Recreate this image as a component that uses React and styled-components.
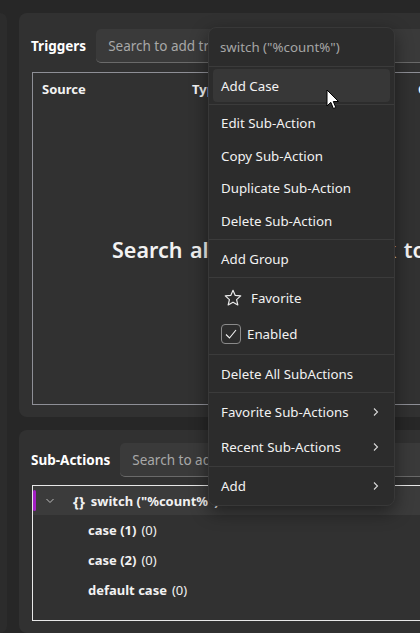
import React from "react";
import styled, { createGlobalStyle } from "styled-components";

const Global = createGlobalStyle`
  html, body {
    margin: 0;
    padding: 0;
    background: #272727;
    overflow: hidden;
  }
  body {
    font-family: "Noto Sans", "Open Sans", sans-serif;
    color: #f2f2f2;
  }
`;

const Page = styled.div`
  position: relative;
  display: flex;
  gap: 12px;
  padding-top: 13px;
  height: 620px;
  width: 420px;
  overflow: hidden;
`;

const Sliver = styled.div`
  width: 7px;
  flex-shrink: 0;
  background: #2c2c2c;
  border-radius: 0 8px 8px 0;
`;

const Column = styled.div`
  display: flex;
  flex-direction: column;
  gap: 13px;
  width: 640px;
  flex-shrink: 0;
`;

const Panel = styled.section`
  display: flex;
  flex-direction: column;
  background: #313131;
  border-radius: 8px;
  height: ${(p) => (p.$h ? `${p.$h}px` : "auto")};
  flex: ${(p) => (p.$h ? "none" : "1")};
`;

const PanelHeader = styled.div`
  display: flex;
  align-items: center;
  gap: 10px;
  padding: ${(p) => p.$top || 16}px 0 0 12px;
`;

const Label = styled.span`
  font-size: 13.5px;
  font-weight: 700;
  color: #ffffff;
`;

const SearchBox = styled.div`
  flex: 1;
  height: 34px;
  box-sizing: border-box;
  display: flex;
  align-items: center;
  padding-left: 12px;
  background: #3a3a3a;
  border-radius: 5px;
  border-bottom: 1px solid #6a6a6a;
  font-size: 13.5px;
  color: #a8a8a8;
`;

const TableBox = styled.div`
  margin: ${(p) => (p.$focus ? 8 : 9)}px 0 12px 13px;
  flex: 1;
  border: 1px solid ${(p) => (p.$focus ? "#e8e8e8" : "#8e8f96")};
  border-right: none;
  display: flex;
  flex-direction: column;
`;

const TableHead = styled.div`
  display: grid;
  grid-template-columns: 150px 226px 1fr;
  padding: 7px 0 0 9px;
  font-size: 13px;
  font-weight: 700;
  line-height: 18px;
`;

const EmptyText = styled.div`
  flex: 1;
  display: flex;
  align-items: center;
  padding: 0 0 4px 79px;
  font-size: 21.5px;
  font-weight: 600;
  word-spacing: 2px;
  white-space: nowrap;
`;

const TreeRow = styled.div`
  position: relative;
  display: flex;
  align-items: center;
  height: ${(p) => (p.$top ? 29 : 30)}px;
  padding-left: ${(p) => (p.$top ? 12 : 55)}px;
  background: ${(p) => (p.$selected ? "#3b3b3b" : "transparent")};
  font-size: 13px;
  gap: 5px;
  white-space: nowrap;

  &::before {
    content: "";
    display: ${(p) => (p.$selected ? "block" : "none")};
    position: absolute;
    left: 0;
    top: 4px;
    width: 3px;
    height: 21px;
    background: #a31fc4;
    border-radius: 2px;
  }
`;

const Bold = styled.span`
  font-weight: 700;
`;

const Braces = styled.span`
  font-size: 15px;
  font-weight: 700;
  margin: 0 1px 0 13px;
`;

const Menu = styled.div`
  position: absolute;
  left: 208px;
  top: 27px;
  width: 187px;
  box-sizing: border-box;
  background: #2c2c2c;
  border: 1px solid #383838;
  border-radius: 8px;
  box-shadow: 0 6px 18px rgba(0, 0, 0, 0.45);
  font-size: 13.3px;
  color: #f2f2f2;
`;

const MenuHeader = styled.div`
  height: 38px;
  display: flex;
  align-items: center;
  padding-left: 11px;
  color: #a6a6a6;
`;

const Section = styled.div`
  border-top: 1px solid #3b3b3b;
  padding: 2px 0;
`;

const Item = styled.div`
  height: ${(p) => p.$h || 33}px;
  margin: 0 4px;
  padding: 0 10px 0 ${(p) => p.$pl || 8}px;
  display: flex;
  align-items: center;
  gap: ${(p) => p.$gap || 0}px;
  border-radius: 4px;
  background: ${(p) => (p.$hover ? "#373737" : "transparent")};
  box-sizing: border-box;
  white-space: nowrap;

  & > .grow {
    flex: 1;
  }
`;

const CheckBox = styled.span`
  width: 20px;
  height: 20px;
  box-sizing: border-box;
  border: 1px solid #8a8a8a;
  border-radius: 4px;
  display: flex;
  align-items: center;
  justify-content: center;
`;

const Cursor = styled.svg`
  position: absolute;
  left: 326px;
  top: 89px;
`;

const Chevron = () => (
  <svg width="8" height="10" viewBox="0 0 8 10">
    <path d="M2 1.5 L5.5 5 L2 8.5" fill="none" stroke="#d8d8d8" strokeWidth="1.1" />
  </svg>
);

const Star = () => (
  <svg width="20" height="20" viewBox="0 0 24 24">
    <path
      d="M12 2.8 L14.7 8.9 L21.3 9.5 L16.3 13.9 L17.8 20.4 L12 17 L6.2 20.4 L7.7 13.9 L2.7 9.5 L9.3 8.9 Z"
      fill="none"
      stroke="#ececec"
      strokeWidth="1.4"
      strokeLinejoin="round"
    />
  </svg>
);

export default function App() {
  return (
    <>
      <Global />
      <Page>
        <Sliver />
        <Column>
          <Panel $h={404}>
            <PanelHeader>
              <Label>Triggers</Label>
              <SearchBox>Search to add triggers</SearchBox>
            </PanelHeader>
            <TableBox>
              <TableHead>
                <span>Source</span>
                <span>Type</span>
                <span>Category</span>
              </TableHead>
              <EmptyText>Search all triggers, or click to add one</EmptyText>
            </TableBox>
          </Panel>
          <Panel>
            <PanelHeader $top={13}>
              <Label>Sub-Actions</Label>
              <SearchBox>Search to add sub-actions</SearchBox>
            </PanelHeader>
            <TableBox $focus>
              <TreeRow $top $selected>
                <svg width="10" height="8" viewBox="0 0 10 8">
                  <path d="M1.5 2 L5 5.5 L8.5 2" fill="none" stroke="#bdbdbd" strokeWidth="1" />
                </svg>
                <Braces>{"{}"}</Braces>
                <Bold>switch ("%count%")</Bold>
              </TreeRow>
              <TreeRow>
                <Bold>case (1)</Bold>
                <span>(0)</span>
              </TreeRow>
              <TreeRow>
                <Bold>case (2)</Bold>
                <span>(0)</span>
              </TreeRow>
              <TreeRow>
                <Bold>default case</Bold>
                <span>(0)</span>
              </TreeRow>
            </TableBox>
          </Panel>
        </Column>

        <Menu>
          <MenuHeader>switch ("%count%")</MenuHeader>
          <Section>
            <Item $hover>Add Case</Item>
          </Section>
          <Section>
            <Item $h={32.5}>Edit Sub-Action</Item>
            <Item $h={32.5}>Copy Sub-Action</Item>
            <Item $h={32.5}>Duplicate Sub-Action</Item>
            <Item $h={32.5}>Delete Sub-Action</Item>
          </Section>
          <Section>
            <Item>Add Group</Item>
          </Section>
          <Section>
            <Item $h={36} $gap={8} $pl={10}>
              <Star />
              <span>Favorite</span>
            </Item>
            <Item $h={36} $gap={6}>
              <CheckBox>
                <svg width="14" height="14" viewBox="0 0 14 14">
                  <path d="M2 7.5 L5.5 11 L12 3" fill="none" stroke="#f0f0f0" strokeWidth="1.1" />
                </svg>
              </CheckBox>
              <span>Enabled</span>
            </Item>
          </Section>
          <Section>
            <Item>Delete All SubActions</Item>
          </Section>
          <Section>
            <Item $h={34.5}>
              <span className="grow">Favorite Sub-Actions</span>
              <Chevron />
            </Item>
            <Item $h={34.5}>
              <span className="grow">Recent Sub-Actions</span>
              <Chevron />
            </Item>
          </Section>
          <Section>
            <Item $h={34}>
              <span className="grow">Add</span>
              <Chevron />
            </Item>
          </Section>
        </Menu>

        <Cursor width="14" height="22" viewBox="0 0 14 22">
          <path
            d="M1 1 L1 17 L4.8 13.3 L7.4 19.5 L9.8 18.5 L7.3 12.5 L12.5 12.5 Z"
            fill="#ffffff"
            stroke="#000000"
            strokeWidth="1"
            strokeLinejoin="round"
          />
        </Cursor>
      </Page>
    </>
  );
}
